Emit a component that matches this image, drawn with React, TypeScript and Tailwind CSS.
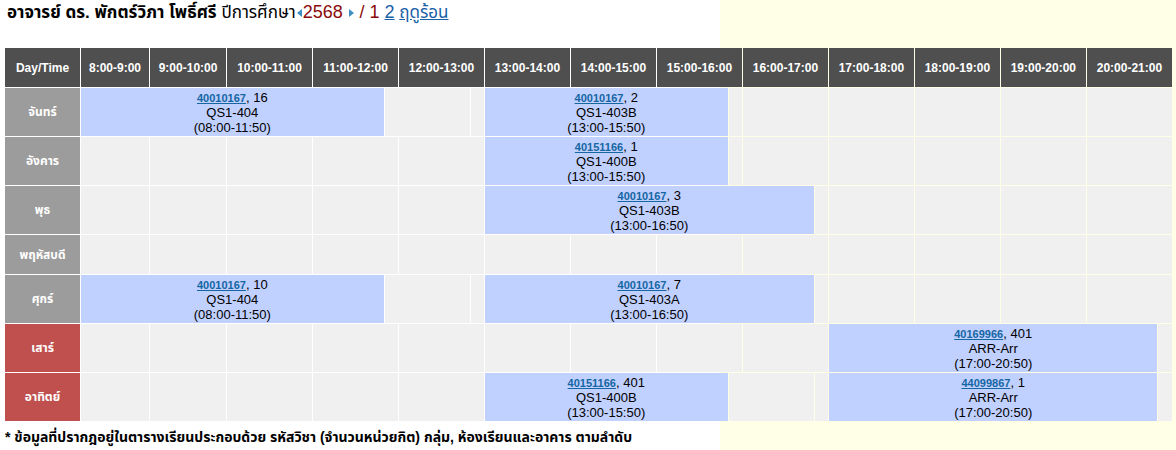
import React from 'react';

type Course = { code: string; group: string; room: string; time: string };
type Seg = { span: number; course?: Course };

const HOURS = [
  '8:00-9:00', '9:00-10:00', '10:00-11:00', '11:00-12:00', '12:00-13:00', '13:00-14:00',
  '14:00-15:00', '15:00-16:00', '16:00-17:00', '17:00-18:00', '18:00-19:00', '19:00-20:00', '20:00-21:00',
];

// one empty cell per hour, n times
const hrs = (n: number): Seg[] => Array.from({ length: n }, () => ({ span: 6 }));
const gap = (span: number): Seg => ({ span });
const blk = (span: number, code: string, group: string, room: string, time: string): Seg => ({
  span,
  course: { code, group, room, time },
});

const ROWS: { day: string; weekend?: boolean; short?: boolean; segs: Seg[] }[] = [
  {
    day: 'จันทร์',
    segs: [
      blk(23, '40010167', '16', 'QS1-404', '08:00-11:50'), gap(6), gap(1),
      blk(17, '40010167', '2', 'QS1-403B', '13:00-15:50'), gap(1), ...hrs(5),
    ],
  },
  {
    day: 'อังคาร',
    segs: [...hrs(5), blk(17, '40151166', '1', 'QS1-400B', '13:00-15:50'), gap(1), ...hrs(5)],
  },
  {
    day: 'พุธ',
    segs: [...hrs(5), blk(23, '40010167', '3', 'QS1-403B', '13:00-16:50'), gap(1), ...hrs(4)],
  },
  { day: 'พฤหัสบดี', short: true, segs: hrs(13) },
  {
    day: 'ศุกร์',
    segs: [
      blk(23, '40010167', '10', 'QS1-404', '08:00-11:50'), gap(6), gap(1),
      blk(23, '40010167', '7', 'QS1-403A', '13:00-16:50'), gap(1), ...hrs(4),
    ],
  },
  {
    day: 'เสาร์',
    weekend: true,
    segs: [...hrs(9), blk(23, '40169966', '401', 'ARR-Arr', '17:00-20:50'), gap(1)],
  },
  {
    day: 'อาทิตย์',
    weekend: true,
    segs: [
      ...hrs(5), blk(17, '40151166', '401', 'QS1-400B', '13:00-15:50'), gap(6), gap(1),
      blk(23, '44099867', '1', 'ARR-Arr', '17:00-20:50'), gap(1),
    ],
  },
];

const Tri = ({ dir }: { dir: 'l' | 'r' }) => (
  <svg width="7" height="10" viewBox="0 0 7 10" className="inline-block align-[0px]">
    <path d={dir === 'l' ? 'M6 1 L1 5 L6 9 Z' : 'M1 1 L6 5 L1 9 Z'} fill="#3d8fc4" />
  </svg>
);

export default function App() {
  return (
    <div className="min-h-screen bg-[#fffee6] font-['Liberation_Sans','Noto_Sans_Thai','Noto_Sans',Tahoma,sans-serif] text-black">
      <div className="w-[720px] min-h-[450px] bg-white">
        <div className="h-[47px] pl-[7px] text-[17px] leading-[24px] whitespace-nowrap">
          <span className="font-bold">อาจารย์ ดร. พักตร์วิภา โพธิ์ศรี</span>{' '}
          <span>ปีการศึกษา</span>
          <Tri dir="l" />
          <span className="text-[#8b0a0a] text-[18px]">2568</span>{' '}
          <Tri dir="r" />
          <span className="text-[#8b0a0a] text-[18px]"> / 1 </span>
          <a href="#" className="text-[#1a5fa8] underline text-[18px]">2</a>{' '}
          <a href="#" className="text-[#1a5fa8] underline">ฤดูร้อน</a>
        </div>

        <table className="table-fixed border-separate border-spacing-[1px] w-[1169px] ml-[4px]">
          <colgroup>
            <col className="w-[75px]" />
            {Array.from({ length: 6 }, (_, i) => <col key={'a' + i} className="w-[10.5px]" />)}
            {Array.from({ length: 6 }, (_, i) => <col key={'b' + i} className="w-[11.833px]" />)}
            {Array.from({ length: 66 }, (_, i) => <col key={'c' + i} className="w-[13.333px]" />)}
          </colgroup>
          <thead>
            <tr>
              <th className="h-[39px] p-0 bg-[#4f4f4f] text-white text-[12px] font-bold">Day/Time</th>
              {HOURS.map(h => (
                <th key={h} colSpan={6} className="h-[39px] p-0 bg-[#4f4f4f] text-white text-[12px] font-bold whitespace-nowrap">
                  {h}
                </th>
              ))}
            </tr>
          </thead>
          <tbody>
            {ROWS.map(r => (
              <tr key={r.day}>
                <td
                  className={`p-0 text-center text-white text-[12px] font-bold ${r.short ? 'h-[39px]' : 'h-[48px]'} ${
                    r.weekend ? 'bg-[#c0504d]' : 'bg-[#9c9c9c]'
                  }`}
                >
                  {r.day}
                </td>
                {r.segs.map((s, i) =>
                  s.course ? (
                    <td key={i} colSpan={s.span} className="p-0 pt-[1px] bg-[#c0d0ff] text-center text-[13px] leading-[15px] whitespace-nowrap">
                      <a href="#" className="font-bold underline text-[11px] leading-[11px] text-[#1566a3]">{s.course.code}</a>, {s.course.group}
                      <br />
                      {s.course.room}
                      <br />({s.course.time})
                    </td>
                  ) : (
                    <td key={i} colSpan={s.span} className="p-0 bg-[#f0f0f0]" />
                  )
                )}
              </tr>
            ))}
          </tbody>
        </table>

        <p className="pl-[5px] mt-[6px] text-[14px] font-bold leading-[18px] whitespace-nowrap">
          * ข้อมูลที่ปรากฎอยู่ในตารางเรียนประกอบด้วย รหัสวิชา (จำนวนหน่วยกิต) กลุ่ม, ห้องเรียนและอาคาร ตามลำดับ
        </p>
      </div>
    </div>
  );
}
